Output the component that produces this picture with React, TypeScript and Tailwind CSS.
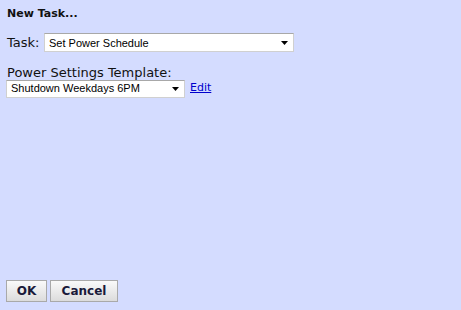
import React from 'react';

const label = "font-['DejaVu_Sans',sans-serif] text-[13px] text-[#111]";

function Caret() {
  return (
    <svg width="7" height="4" viewBox="0 0 7 4" className="shrink-0 mt-[1px]">
      <path d="M0 0H7L3.5 4Z" fill="#000" />
    </svg>
  );
}

function FakeSelect({ value, className }: { value: string; className: string }) {
  return (
    <div
      className={`flex items-center justify-between bg-white border border-[#d0d0d0] border-t-[#a8a8a8] pl-[4px] pr-[5px] font-['Liberation_Sans',sans-serif] text-[11px] text-black ${className}`}
    >
      <span>{value}</span>
      <Caret />
    </div>
  );
}

function Button({ children, className }: { children: React.ReactNode; className: string }) {
  return (
    <button
      className={`h-[22px] border border-[#a9a9a9] bg-gradient-to-b from-[#fafafa] to-[#dcdcdc] font-['DejaVu_Sans',sans-serif] font-bold text-[12px] text-[#1a1a3a] ${className}`}
    >
      {children}
    </button>
  );
}

export default function App() {
  return (
    <div className="w-[461px] h-[310px] bg-[#d4dcff] flex flex-col px-[6px]">
      <div className="pt-[7px] pl-[1px] font-['DejaVu_Sans',sans-serif] font-bold text-[11px] text-[#111] leading-[13px]">
        New Task...
      </div>

      <div className="mt-[13px] flex items-center">
        <span className={`${label} pl-[1px] w-[38px]`}>Task:</span>
        <FakeSelect value="Set Power Schedule" className="w-[250px] h-[19px]" />
      </div>

      <div className={`${label} mt-[12px] pl-[1px] leading-[15px]`}>Power Settings Template:</div>
      <div className="flex items-center">
        <FakeSelect value="Shutdown Weekdays 6PM" className="w-[179px] h-[18px]" />
        <a href="#" className="ml-[5px] font-['DejaVu_Sans',sans-serif] text-[11px] text-[#0000cc] underline">
          Edit
        </a>
      </div>

      <div className="mt-auto mb-[8px] flex gap-[3px]">
        <Button className="w-[41px]">OK</Button>
        <Button className="w-[68px]">Cancel</Button>
      </div>
    </div>
  );
}
